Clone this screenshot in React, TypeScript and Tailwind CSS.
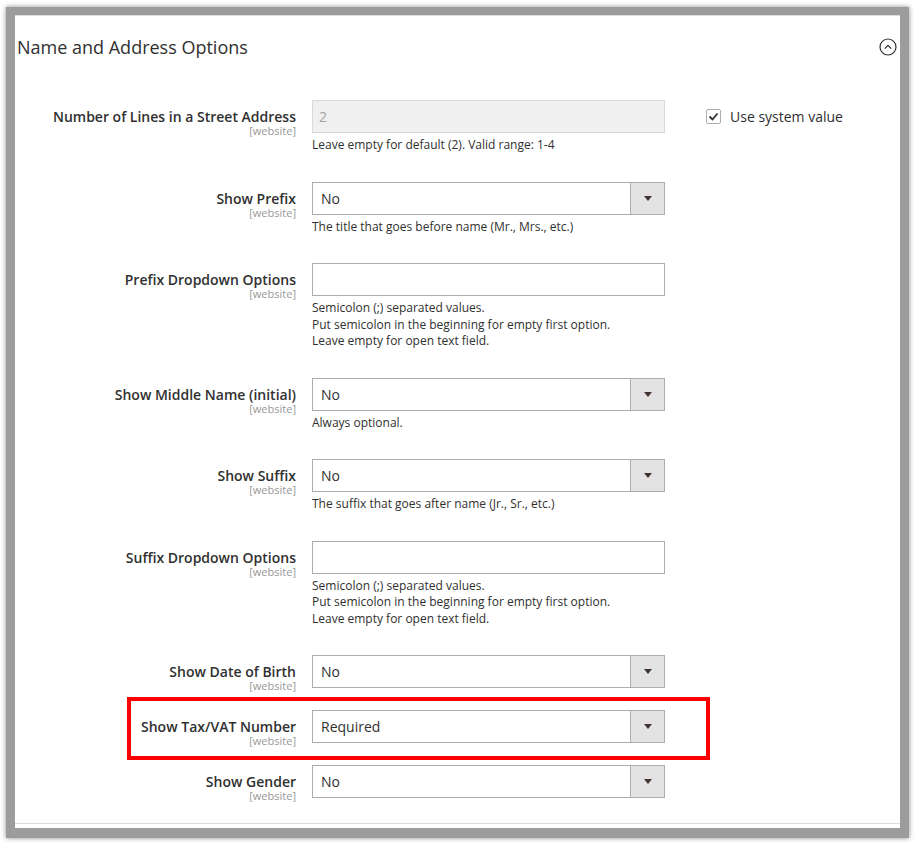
import React from 'react';

type Row = {
  label: string;
  kind: 'text' | 'select' | 'disabled';
  value?: string;
  notes?: string[];
  highlight?: boolean;
  systemValue?: boolean;
};

const rows: Row[] = [
  { label: 'Number of Lines in a Street Address', kind: 'disabled', value: '2', notes: ['Leave empty for default (2). Valid range: 1-4'], systemValue: true },
  { label: 'Show Prefix', kind: 'select', value: 'No', notes: ['The title that goes before name (Mr., Mrs., etc.)'] },
  {
    label: 'Prefix Dropdown Options',
    kind: 'text',
    notes: ['Semicolon (;) separated values.', 'Put semicolon in the beginning for empty first option.', 'Leave empty for open text field.'],
  },
  { label: 'Show Middle Name (initial)', kind: 'select', value: 'No', notes: ['Always optional.'] },
  { label: 'Show Suffix', kind: 'select', value: 'No', notes: ['The suffix that goes after name (Jr., Sr., etc.)'] },
  {
    label: 'Suffix Dropdown Options',
    kind: 'text',
    notes: ['Semicolon (;) separated values.', 'Put semicolon in the beginning for empty first option.', 'Leave empty for open text field.'],
  },
  { label: 'Show Date of Birth', kind: 'select', value: 'No' },
  { label: 'Show Tax/VAT Number', kind: 'select', value: 'Required', highlight: true },
  { label: 'Show Gender', kind: 'select', value: 'No' },
];

const Control: React.FC<{ row: Row }> = ({ row }) => {
  if (row.kind === 'disabled') {
    return (
      <div className="h-[33px] border border-[#d9d9d9] bg-[#f0f0f0] pl-[6px] flex items-center text-[14px] text-[#a3a3a3]">
        {row.value}
      </div>
    );
  }
  if (row.kind === 'text') {
    return <div className="h-[33px] border border-[#adadad] bg-white" />;
  }
  return (
    <div className="h-[33px] border border-[#adadad] bg-white flex">
      <div className="flex-1 pl-[8px] flex items-center text-[14px] text-[#303030]">{row.value}</div>
      <div className="w-[34px] border-l border-[#adadad] bg-[#e3e3e3] flex items-center justify-center">
        <svg width="8" height="5" viewBox="0 0 8 5">
          <path d="M0 0h8L4 5z" fill="#41362f" />
        </svg>
      </div>
    </div>
  );
};

const FieldRow: React.FC<{ row: Row }> = ({ row }) => (
  <div className="relative flex mb-[18px]">
    {row.highlight && (
      <div className="absolute left-[112px] right-[190px] top-[-13px] bottom-[-13px] border-4 border-[#ff0000] pointer-events-none" />
    )}
    <div className="w-[281px] text-right pt-[8px]">
      <div className="text-[14px] leading-[17px] font-semibold text-[#303030]">{row.label}</div>
      <div className="text-[11px] leading-[12px] text-[#999999]">[website]</div>
    </div>
    <div className="ml-[16px] w-[353px]">
      <Control row={row} />
      {row.notes && (
        <div className="mt-[4px] mb-[10px] text-[12px] leading-[16.5px] text-[#303030]">
          {row.notes.map((n) => (
            <div key={n}>{n}</div>
          ))}
        </div>
      )}
    </div>
    {row.systemValue && (
      <div className="ml-[41px] pt-[9px] flex items-start">
        <div className="w-[15px] h-[15px] border border-[#adadad] rounded-[2px] bg-white flex items-center justify-center">
          <svg width="11" height="9" viewBox="0 0 11 9">
            <path d="M1.5 4.5l3 3 5-6" stroke="#303030" strokeWidth="1.8" fill="none" />
          </svg>
        </div>
        <span className="ml-[9px] text-[14px] leading-[15px] text-[#303030]">Use system value</span>
      </div>
    )}
  </div>
);

const App: React.FC = () => {
  return (
    <div className="w-[915px] h-[843px] bg-white font-['Open_Sans',sans-serif] pt-[7px] pl-[6px]">
      <div className="w-[903px] h-[831px] border-x-[9px] border-t-[8px] border-b-[10px] border-[#9c9c9c] shadow-[0_0_5px_rgba(0,0,0,0.45)] bg-white">
        <div className="h-[809px] border-t border-b border-[#dcdcdc]">
          <div className="flex items-center justify-between pl-[2px] pr-[3px] pt-[19px]">
            <h2 className="text-[18px] leading-[24px] text-[#303030]">Name and Address Options</h2>
            <svg width="18" height="18" viewBox="0 0 18 18">
              <circle cx="9" cy="9" r="8" stroke="#303030" strokeWidth="1.2" fill="none" />
              <path d="M5.8 10.6L9 7.4l3.2 3.2" stroke="#303030" strokeWidth="1.3" fill="none" />
            </svg>
          </div>
          <div className="mt-[41px]">
            {rows.map((r) => (
              <FieldRow key={r.label} row={r} />
            ))}
          </div>
        </div>
      </div>
    </div>
  );
};

export default App;
